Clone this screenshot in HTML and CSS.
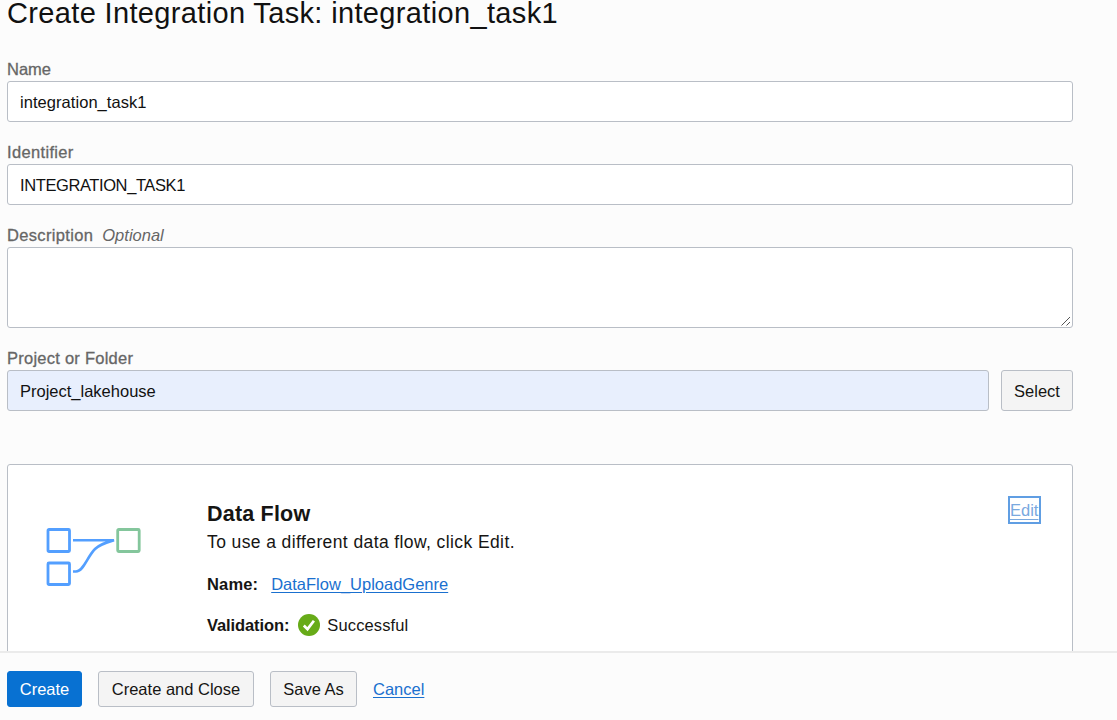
FILE: index.html
```html
<!DOCTYPE html>
<html lang="en">
<head>
<meta charset="utf-8">
<title>Create Integration Task</title>
<link rel="stylesheet" href="styles.css">
</head>
<body>
<div class="page">
  <main class="content">
    <h1 class="title"><span class="t-title">Create Integration Task: integration_task1</span></h1>
    <div class="field">
      <label class="label"><span>Name</span></label>
      <div class="input"><span class="t-in1">integration_task1</span></div>
    </div>
    <div class="field">
      <label class="label"><span class="t-ident">Identifier</span></label>
      <div class="input"><span class="t-in2">INTEGRATION_TASK1</span></div>
    </div>
    <div class="field">
      <label class="label"><span class="t-desc">Description</span><em class="optional">Optional</em></label>
      <div class="input textarea">
        <svg class="grip" width="10" height="10" viewBox="0 0 10 10"><path d="M.5 9.500 9 1M5.500 9.500 9 6" fill="none" stroke="#555" stroke-width="1"/></svg>
      </div>
    </div>
    <div class="field">
      <label class="label"><span class="t-proj">Project or Folder</span></label>
      <div class="row">
        <div class="input filled"><span>Project_lakehouse</span></div>
        <button class="btn select"><span>Select</span></button>
      </div>
    </div>
    <section class="card">
      <svg class="flow" width="96" height="60" viewBox="0 0 96 60" fill="none" stroke-width="2.800">
        <rect x="2" y="2.500" width="21.500" height="22" rx="1" stroke="#539fff"/>
        <rect x="2" y="36" width="21.500" height="21.500" rx="1" stroke="#539fff"/>
        <rect x="71.700" y="2.500" width="21.500" height="22" rx="1" stroke="#84c69c"/>
        <path d="M27 13.200H68C59 16 53.500 17.500 49 22C41 30 37.500 44.500 30 44.500H27" stroke="#539fff" stroke-width="2.600"/>
      </svg>
      <div class="details">
        <h2 class="heading"><span class="t-head">Data Flow</span></h2>
        <p class="hint">To use a different data flow, click Edit.</p>
        <p class="line"><b class="t-nm">Name:</b><a class="link flow-link">DataFlow_UploadGenre</a></p>
        <p class="line"><b class="t-val">Validation:</b>
          <svg class="check" width="22" height="22" viewBox="0 0 22 22"><circle cx="11" cy="11" r="11" fill="#67ab18"/><path d="M5.800 11.500 9.500 15.100 15.900 6.700" fill="none" stroke="#fff" stroke-width="2.700"/></svg>
          <span class="t-succ">Successful</span></p>
      </div>
      <a class="edit"><span>Edit</span></a>
    </section>
  </main>
  <footer class="footer">
    <button class="btn primary"><span>Create</span></button>
    <button class="btn close"><span>Create and Close</span></button>
    <button class="btn save"><span class="t-save">Save As</span></button>
    <a class="link cancel"><span>Cancel</span></a>
  </footer>
</div>
</body>
</html>
```
FILE: styles.css
```css
* { box-sizing: border-box; margin: 0; padding: 0; }
body { font-family: "Liberation Sans", Arial, sans-serif; font-size: 16.5px; color: #161513; background: #fcfcfc; }
.page { height: 720px; display: flex; flex-direction: column; overflow: hidden; }
.content { flex: 1; min-height: 0; overflow: hidden; padding: 0 44px 0 7px; }
.title { height: 60px; line-height: 26px; font-size: 29px; font-weight: 400; color: #111; white-space: nowrap; }
.t-title { letter-spacing: 0.35px; }
.t-in1 { letter-spacing: 0.05px; }
.t-in2 { letter-spacing: -0.4px; }
.t-ident, .t-desc { letter-spacing: 0.34px; }
.t-proj { letter-spacing: 0.25px; }
.t-head { letter-spacing: 0.2px; }
.t-nm { letter-spacing: 0.15px; }
.t-val { letter-spacing: -0.1px; }
.t-succ { letter-spacing: 0.13px; }
.field { margin-bottom: 21px; }
.label { display: flex; gap: 9px; height: 21px; line-height: 18px; color: #666; -webkit-text-stroke: 0.3px #666; }
.optional { -webkit-text-stroke: 0; }
.input { flex: 1; height: 41px; border: 1px solid #b9bec6; border-radius: 3px; background: #fff; padding: 0 12px; line-height: 40px; }
.field .input { color: #111; }
.textarea { height: 81px; display: flex; justify-content: flex-end; align-items: flex-end; }
.field .textarea { padding: 0 1px 1px 0; }
.row { display: flex; gap: 12px; }
.input.filled { background: #e8effd; }
.btn { font: inherit; color: #161513; background: #f4f4f4; border: 1px solid #b9bec6; border-radius: 3px; white-space: nowrap; }
.select { width: 72px; height: 41px; padding-top: 1px; }
.card { display: flex; height: 260px; margin-top: 53px; border: 1px solid #b9bec6; border-radius: 3px; background: #fff; padding: 31px 31px 0 38px; }
.flow { flex: none; margin-top: 31px; }
.details { flex: 1; margin-left: 65px; }
.heading { font-size: 21.5px; line-height: 26px; margin-top: 5px; }
.hint { font-size: 17.5px; letter-spacing: 0.4px; line-height: 20px; margin-top: 5px; }
.line { display: flex; align-items: center; height: 22px; margin-top: 21px; }
.line + .line { margin-top: 19px; }
.link { color: #1a70cf; text-decoration: underline; text-underline-offset: 2px; text-decoration-thickness: 1px; }
.flow-link { margin-left: 13px; }
.check { margin: 0 7px 0 9px; }
.edit { width: 33px; height: 28px; border: 2px solid #609ee3; color: #79a9df; line-height: 25px; text-decoration: underline; text-underline-offset: 3px; white-space: nowrap; }
.footer { flex: none; height: 69px; border-top: 2px solid #ebebeb; padding: 18px 0 0 7px; display: flex; align-items: flex-start; }
.footer .btn { height: 36px; }
.primary { width: 75px; background: #0871d2; border-color: #0871d2; color: #fff; margin-right: 16px; }
.close { width: 156px; margin-right: 16px; }
.save { width: 87px; margin-right: 16px; }
.cancel { line-height: 36px; }
```
